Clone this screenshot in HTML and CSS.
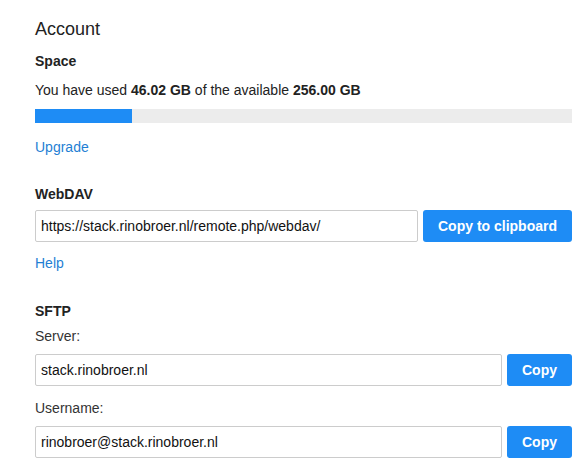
FILE: index.html
```html
<!DOCTYPE html>
<html lang="en">

<head>
    <meta charset="UTF-8">
    <meta name="viewport" content="width=device-width, initial-scale=1.0">
    <title>Account</title>
    <link rel="stylesheet" href="styles.css">
</head>

<body>
    <div class="account">
        <h1>Account</h1>

        <section class="section">
            <h3>Space</h3>
            <p class="usage">You have used <b>46.02 GB</b> of the available <b>256.00 GB</b></p>
            <div class="quota">
                <div class="quota-fill" style="width: 17.98%"></div>
            </div>
            <a href="#" class="link">Upgrade</a>
        </section>

        <section class="section">
            <h3>WebDAV</h3>
            <div class="field-row">
                <input type="text" value="https://stack.rinobroer.nl/remote.php/webdav/" readonly>
                <button class="btn">Copy to clipboard</button>
            </div>
            <a href="#" class="link">Help</a>
        </section>

        <section class="section sftp">
            <h3>SFTP</h3>
            <label>Server:</label>
            <div class="field-row">
                <input type="text" value="stack.rinobroer.nl" readonly>
                <button class="btn">Copy</button>
            </div>
            <label>Username:</label>
            <div class="field-row">
                <input type="text" value="rinobroer@stack.rinobroer.nl" readonly>
                <button class="btn">Copy</button>
            </div>
        </section>
    </div>
</body>

</html>
```

FILE: styles.css
```css
body {
    font-family: "Liberation Sans", Arial, sans-serif;
    font-size: 14px;
    line-height: 16px;
    color: #222;
    margin: 0;
    background-color: white;
}

.account {
    padding: 19px 12px 0 35px;
}

h1 {
    font-size: 18px;
    line-height: 21px;
    font-weight: normal;
    margin: 0 0 13px;
    color: #222;
}

.section {
    margin-bottom: 31px;
}

.sftp {
    padding-top: 1px;
}

h3 {
    font-size: 14px;
    font-weight: bold;
    margin: 0 0 8px;
}

.usage {
    margin: 13px 0 11px;
}

.quota {
    height: 14px;
    background-color: #ececec;
    margin-bottom: 16px;
}

.quota-fill {
    height: 100%;
    background-color: #1e8cf5;
}

.link {
    color: #1f7fd4;
    text-decoration: none;
    display: inline-block;
}

label {
    display: block;
    color: #333;
    margin: 9px 0 10px;
}

.field-row {
    display: flex;
    gap: 5px;
    margin-bottom: 13px;
}

.field-row + label {
    margin-top: 14px;
}

input {
    flex: 1;
    height: 32px;
    box-sizing: border-box;
    border: 1px solid #ccc;
    border-radius: 2px;
    padding: 0 5px;
    font-family: inherit;
    font-size: 14px;
    color: #111;
}

.btn {
    background-color: #1e8cf5;
    color: white;
    border: none;
    border-radius: 3px;
    height: 32px;
    padding: 0 15px;
    font-family: inherit;
    font-size: 14px;
    font-weight: bold;
    cursor: pointer;
}
```
